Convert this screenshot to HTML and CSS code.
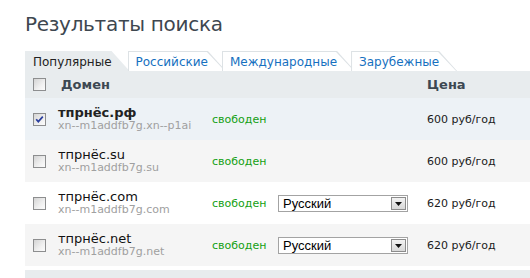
FILE: index.html
```html
<!DOCTYPE html>
<html lang="ru">
<head>
<meta charset="utf-8">
<link rel="stylesheet" href="styles.css">
</head>
<body>
<div class="page">
  <h1 class="title">Результаты поиска</h1>
  <div class="tabs">
    <div class="tab active">Популярные</div>
    <div class="tab">Российские</div>
    <div class="tab">Международные</div>
    <div class="tab">Зарубежные</div>
  </div>
  <div class="table">
    <div class="row head">
      <span class="cb"></span>
      <span class="h-domain">Домен</span>
      <span></span>
      <span></span>
      <span class="h-price">Цена</span>
    </div>
    <div class="row sel">
      <span class="cb"><svg width="11" height="11" viewBox="0 0 11 11"><path d="M2.2 5.2 L4.3 7.6 L8.8 2.6" fill="none" stroke="#2a3f9e" stroke-width="1.7"/></svg></span>
      <div class="dom"><div class="name bold">тпрнёс.рф</div><div class="puny">xn--m1addfb7g.xn--p1ai</div></div>
      <span class="free">свободен</span>
      <span></span>
      <span class="price">600 руб/год</span>
    </div>
    <div class="row alt">
      <span class="cb"></span>
      <div class="dom"><div class="name">тпрнёс.su</div><div class="puny">xn--m1addfb7g.su</div></div>
      <span class="free">свободен</span>
      <span></span>
      <span class="price">600 руб/год</span>
    </div>
    <div class="row">
      <span class="cb"></span>
      <div class="dom"><div class="name">тпрнёс.com</div><div class="puny">xn--m1addfb7g.com</div></div>
      <span class="free">свободен</span>
      <div class="select"><span class="sel-text">Русский</span><span class="sel-btn"><svg width="7" height="4" viewBox="0 0 7 4"><path d="M0 0 H7 L3.5 4 Z" fill="#111"/></svg></span></div>
      <span class="price">620 руб/год</span>
    </div>
    <div class="row alt">
      <span class="cb"></span>
      <div class="dom"><div class="name">тпрнёс.net</div><div class="puny">xn--m1addfb7g.net</div></div>
      <span class="free">свободен</span>
      <div class="select"><span class="sel-text">Русский</span><span class="sel-btn"><svg width="7" height="4" viewBox="0 0 7 4"><path d="M0 0 H7 L3.5 4 Z" fill="#111"/></svg></span></div>
      <span class="price">620 руб/год</span>
    </div>
    <div class="foot"></div>
  </div>
</div>
</body>
</html>
```
FILE: styles.css
```css
html, body {
  margin: 0;
  padding: 0;
  background: #fff;
}
.page {
  padding-left: 25px;
  font-family: "DejaVu Sans", Verdana, sans-serif;
  overflow: hidden;
  height: 278px;
}
.title {
  margin: 13px 0 0 0;
  font-size: 20px;
  font-weight: normal;
  color: #3e4750;
  line-height: 23px;
  letter-spacing: -0.3px;
}
.tabs {
  display: flex;
  margin-top: 15px;
  height: 20px;
}
.tab {
  position: relative;
  height: 20px;
  box-sizing: border-box;
  padding: 4px 18px 0 8px;
  margin-right: -4px;
  font-size: 12px;
  line-height: 15px;
  color: #1570c0;
  background: #dde2e5;
  clip-path: polygon(0 0, calc(100% - 18px) 0, 100% 100%, 0 100%);
}
.tab::before {
  content: "";
  position: absolute;
  top: 1px;
  left: 1px;
  right: 0;
  bottom: 0;
  background: #fff;
  clip-path: polygon(0 0, calc(100% - 19px) 0, calc(100% - 1px) 100%, 0 100%);
  z-index: -1;
}
.tab.active {
  color: #222;
  background: #e8ecee;
  margin-right: -2px;
}
.tab.active::before {
  display: none;
}
.table {
  display: flex;
  flex-direction: column;
}
.row {
  display: grid;
  grid-template-columns: 25px 154px 66px 149px 1fr;
  align-items: center;
  padding-left: 8px;
  height: 42px;
  font-size: 11px;
  color: #222;
}
.row.head {
  height: 27px;
  background: #e8ecee;
}
.row.sel {
  background: #edf2f6;
}
.row.alt {
  background: #f5f5f5;
}
.h-domain, .h-price {
  font-weight: bold;
  font-size: 13px;
  color: #3d4852;
}
.h-domain {
  padding-left: 3px;
}
.cb {
  width: 11px;
  height: 11px;
  border: 1px solid #8d8e8f;
  background: linear-gradient(135deg, #d4d4d4 0%, #f0f0f0 60%, #fcfcfc 100%);
  display: block;
}
.cb svg {
  display: block;
}
.dom {
  display: flex;
  flex-direction: column;
}
.name {
  font-size: 13px;
  line-height: 14px;
  color: #111;
}
.name.bold {
  font-weight: bold;
  color: #222;
}
.puny {
  font-size: 11px;
  line-height: 12px;
  color: #a0a0a0;
}
.free {
  color: #12a012;
}
.price {
  color: #1a1a1a;
}
.select {
  width: 130px;
  height: 17px;
  box-sizing: border-box;
  border: 1px solid #a3a3a3;
  background: #fff;
  display: flex;
  align-items: center;
  justify-content: space-between;
  font-family: "Liberation Sans", Arial, sans-serif;
  font-size: 13px;
  color: #000;
  padding: 0 1px 0 4px;
}
.sel-btn {
  width: 15px;
  height: 13px;
  box-sizing: border-box;
  border: 1px solid #8c8c8c;
  background: linear-gradient(#f2f2f2, #d8d8d8);
  display: flex;
  align-items: flex-end;
  justify-content: center;
  padding-bottom: 3px;
}
.sel-btn svg {
  display: block;
}
.foot {
  margin-top: 4px;
  height: 20px;
  background: #e8ecee;
}
```
